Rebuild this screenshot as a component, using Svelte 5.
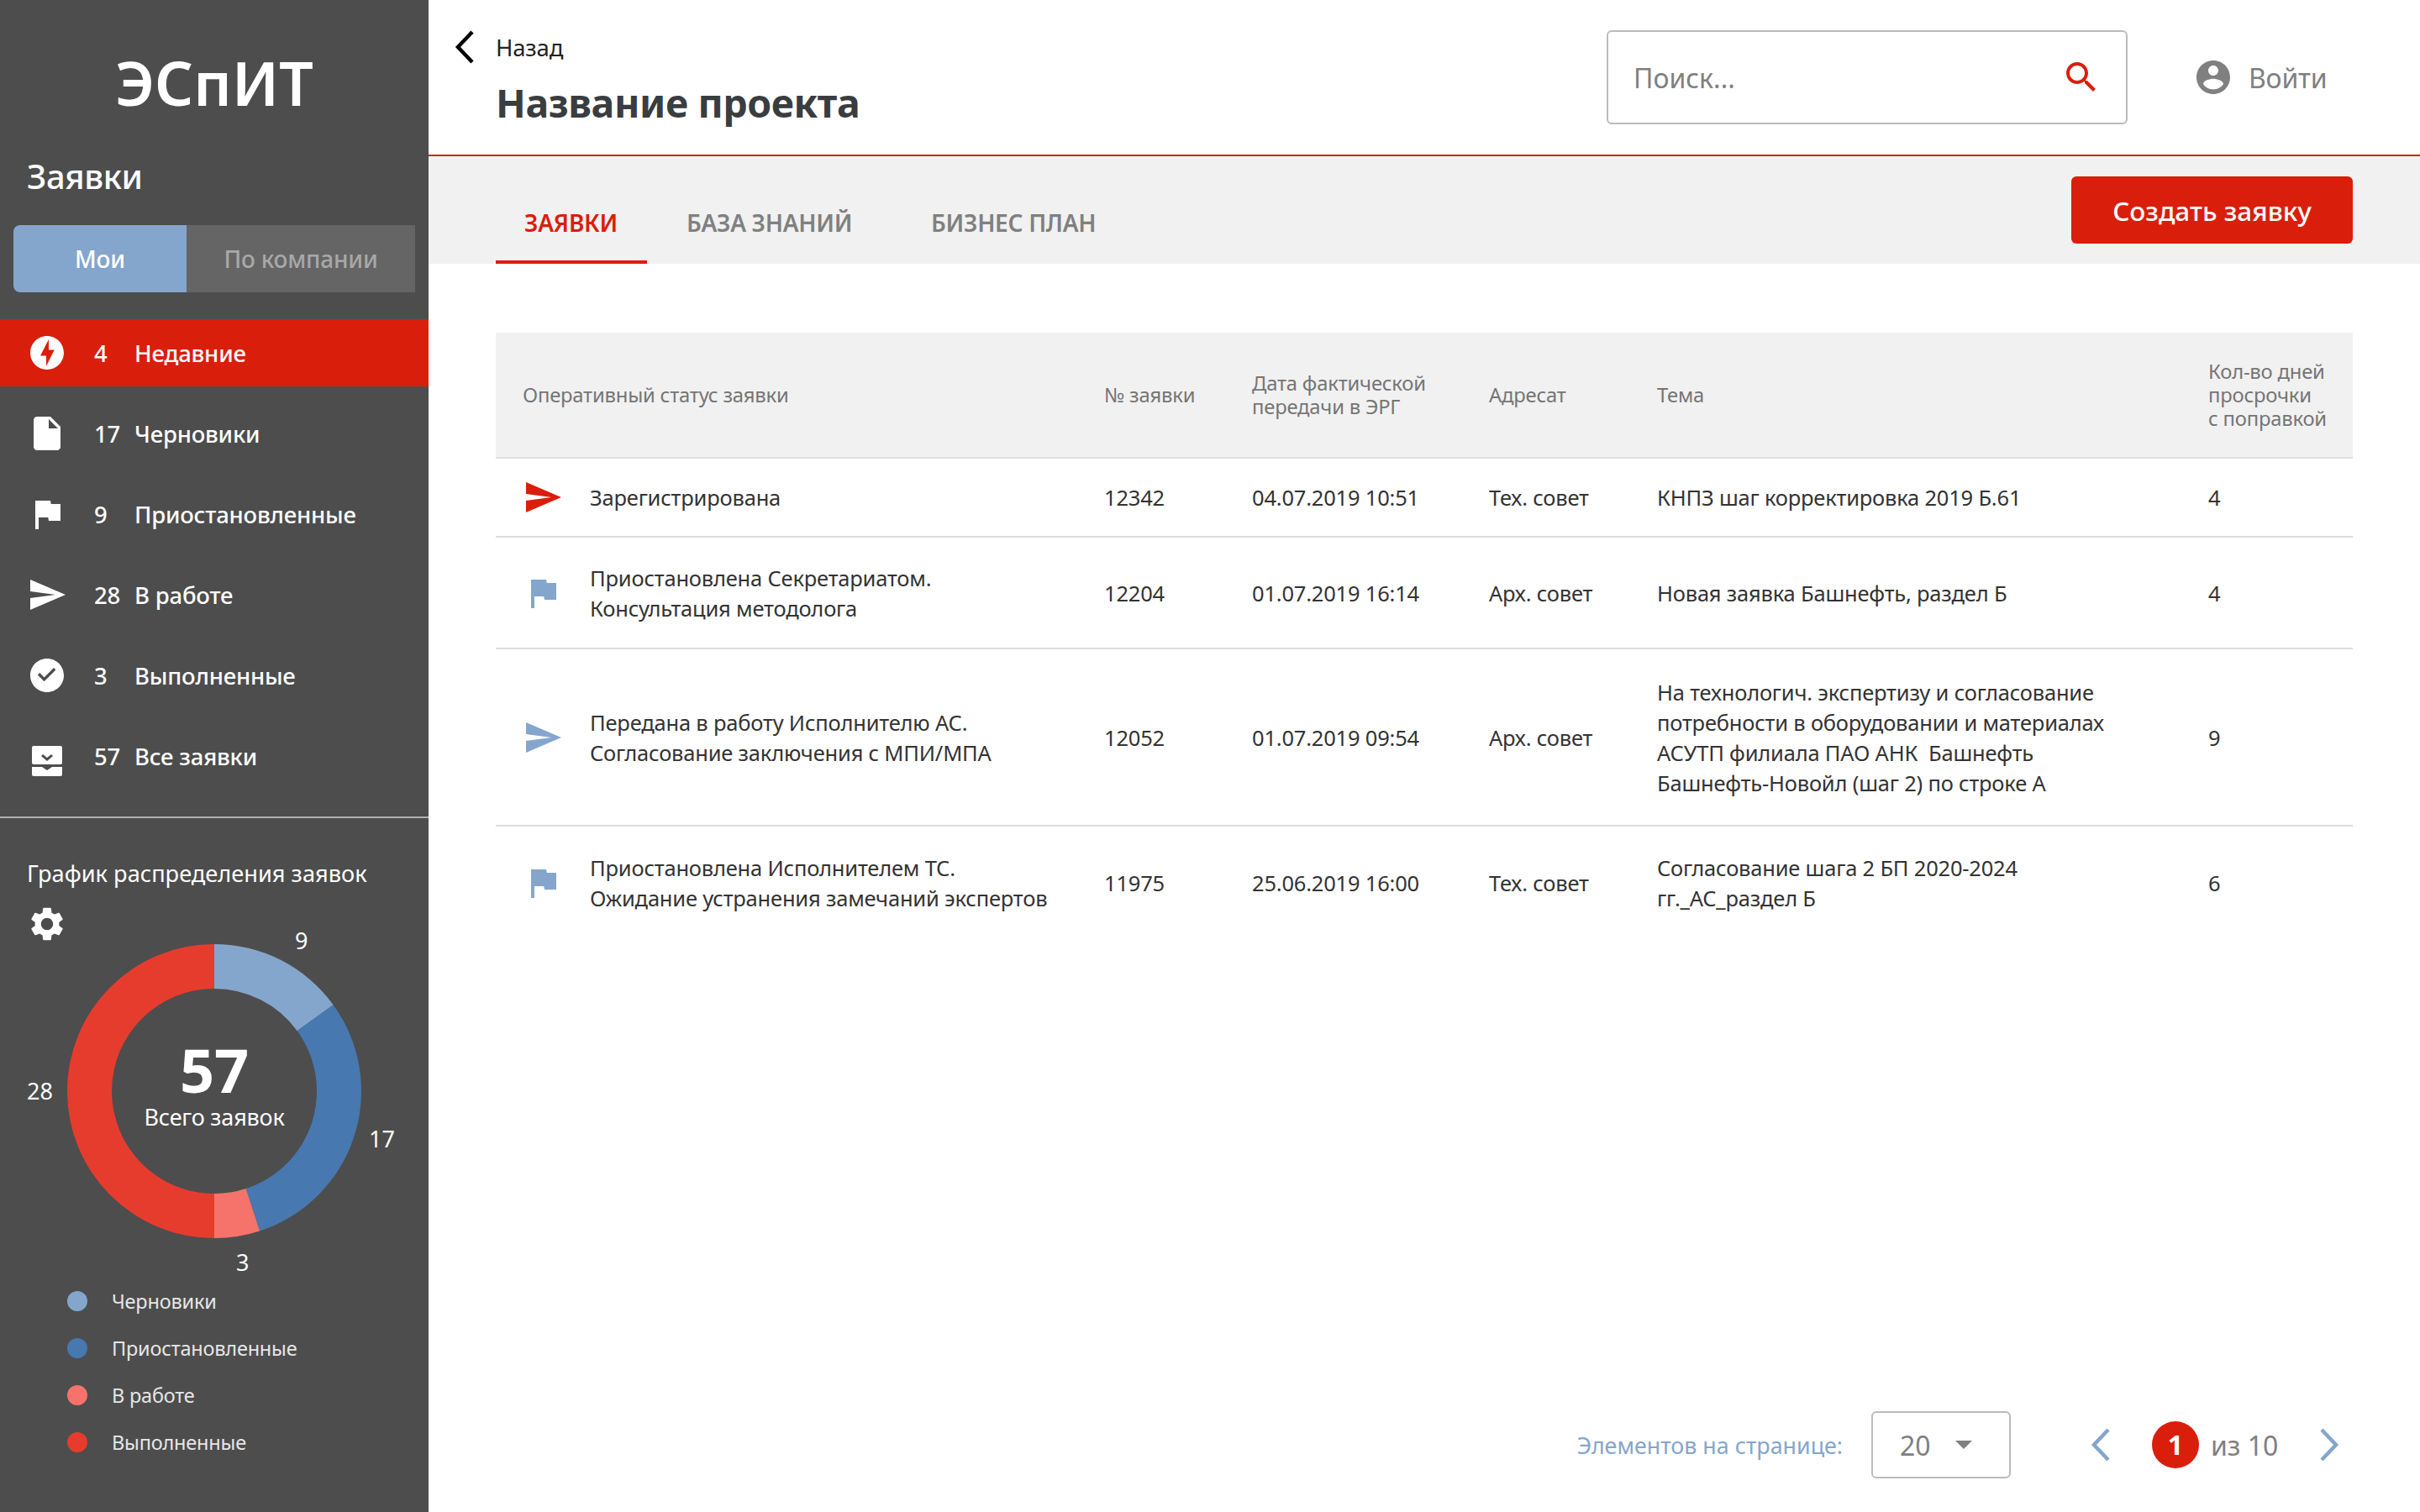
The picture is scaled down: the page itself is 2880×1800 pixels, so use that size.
<script>
	const icons = {
		bolt: 'M12 2.02c-5.51 0-9.98 4.47-9.98 9.98s4.47 9.98 9.98 9.98 9.98-4.47 9.98-9.98S17.51 2.02 12 2.02zM11.48 20v-6.26H8L13 4v6.26h3.35L11.48 20z',
		file: 'M6 2c-1.1 0-1.99.9-1.99 2L4 20c0 1.1.89 2 1.99 2H18c1.1 0 2-.9 2-2V8l-6-6H6zm7 7V3.5L18.5 9H13z',
		flag: 'M14.4 6L14 4H5v17h2v-7h5.6l.4 2h7V6z',
		send: 'M2.01 21L23 12 2.01 3 2 10l15 2-15 2z',
		check: 'M12 2C6.48 2 2 6.48 2 12s4.48 10 10 10 10-4.48 10-10S17.52 2 12 2zm-1.7 13.6l-3.9-3.9 1.2-1.2 2.7 2.7 5.7-5.7 1.2 1.2z',
		inbox: 'M4 6h16a1 1 0 011 1v9a1 1 0 01-1 1H4a1 1 0 01-1-1V7a1 1 0 011-1zm4.5 6L12 15l3.5-3-1-1-2.5 2-2.5-2zM3 18.5h6l3 2 3-2h6V23a1 1 0 01-1 1H4a1 1 0 01-1-1z',
		gear: 'M19.14 12.94c.04-.3.06-.61.06-.94 0-.32-.02-.64-.07-.94l2.03-1.58a.49.49 0 00.12-.61l-1.92-3.32a.488.488 0 00-.59-.22l-2.39.96c-.5-.38-1.03-.7-1.62-.94l-.36-2.54a.484.484 0 00-.48-.41h-3.84c-.24 0-.43.17-.47.41l-.36 2.54c-.59.24-1.13.57-1.62.94l-2.39-.96c-.22-.08-.47 0-.59.22L2.74 8.87c-.12.21-.08.47.12.61l2.03 1.58c-.05.3-.09.63-.09.94s.02.64.07.94l-2.03 1.58a.49.49 0 00-.12.61l1.92 3.32c.12.22.37.29.59.22l2.39-.96c.5.38 1.03.7 1.62.94l.36 2.54c.05.24.24.41.48.41h3.84c.24 0 .44-.17.47-.41l.36-2.54c.59-.24 1.13-.56 1.62-.94l2.39.96c.22.08.47 0 .59-.22l1.92-3.32c.12-.22.07-.47-.12-.61l-2.01-1.58zM12 15.6c-1.98 0-3.6-1.62-3.6-3.6s1.62-3.6 3.6-3.6 3.6 1.62 3.6 3.6-1.62 3.6-3.6 3.6z',
		search: 'M15.5 14h-.79l-.28-.27C15.41 12.59 16 11.11 16 9.5 16 5.91 13.09 3 9.5 3S3 5.91 3 9.5 5.91 16 9.5 16c1.61 0 3.09-.59 4.23-1.57l.27.28v.79l5 4.99L20.49 19l-4.99-5zm-6 0C7.01 14 5 11.99 5 9.5S7.01 5 9.5 5 14 7.01 14 9.5 11.99 14 9.5 14z',
		user: 'M12 2C6.48 2 2 6.48 2 12s4.48 10 10 10 10-4.48 10-10S17.52 2 12 2zm0 3c1.66 0 3 1.34 3 3s-1.34 3-3 3-3-1.34-3-3 1.34-3 3-3zm0 14.2c-2.5 0-4.71-1.28-6-3.22.03-1.99 4-3.08 6-3.08 1.99 0 5.97 1.09 6 3.08-1.29 1.94-3.5 3.22-6 3.22z'
	};

	const menu = [
		{ icon: 'bolt', count: 4, label: 'Недавние', active: true },
		{ icon: 'file', count: 17, label: 'Черновики' },
		{ icon: 'flag', count: 9, label: 'Приостановленные' },
		{ icon: 'send', count: 28, label: 'В работе' },
		{ icon: 'check', count: 3, label: 'Выполненные' },
		{ icon: 'inbox', count: 57, label: 'Все заявки' }
	];

	const legend = [
		{ label: 'Черновики', color: '#85a6cc' },
		{ label: 'Приостановленные', color: '#4778b0' },
		{ label: 'В работе', color: '#f5736a' },
		{ label: 'Выполненные', color: '#e63c2e' }
	];

	// start and end angles read off the chart, clockwise from the top
	const arcs = [
		{ from: 0, to: 54, color: '#85a6cc' },
		{ from: 54, to: 162, color: '#4778b0' },
		{ from: 162, to: 180, color: '#f5736a' },
		{ from: 180, to: 360, color: '#e63c2e' }
	];

	function point(r, deg) {
		const a = (deg * Math.PI) / 180;
		return `${(175 + r * Math.sin(a)).toFixed(2)} ${(175 - r * Math.cos(a)).toFixed(2)}`;
	}

	function arcPath(from, to) {
		const large = to - from > 180 ? 1 : 0;
		const end = to === 360 ? 359.99 : to;
		return `M${point(175, from)}A175 175 0 ${large} 1 ${point(175, end)}L${point(122, end)}A122 122 0 ${large} 0 ${point(122, from)}Z`;
	}

	const rows = [
		{ icon: 'send', color: '#da1e0c', status: ['Зарегистрирована'], num: 12342, date: '04.07.2019 10:51', to: 'Тех. совет', topic: ['КНПЗ шаг корректировка 2019 Б.61'], days: 4 },
		{ icon: 'flag', color: '#85a6cc', status: ['Приостановлена Секретариатом.', 'Консультация методолога'], num: 12204, date: '01.07.2019 16:14', to: 'Арх. совет', topic: ['Новая заявка Башнефть, раздел Б'], days: 4 },
		{ icon: 'send', color: '#85a6cc', status: ['Передана в работу Исполнителю АС.', 'Согласование заключения с МПИ/МПА'], num: 12052, date: '01.07.2019 09:54', to: 'Арх. совет', topic: ['На технологич. экспертизу и согласование', 'потребности в оборудовании и материалах', 'АСУТП филиала ПАО АНК  Башнефть', 'Башнефть-Новойл (шаг 2) по строке А'], days: 9 },
		{ icon: 'flag', color: '#85a6cc', status: ['Приостановлена Исполнителем ТС.', 'Ожидание устранения замечаний экспертов'], num: 11975, date: '25.06.2019 16:00', to: 'Тех. совет', topic: ['Согласование шага 2 БП 2020-2024', 'гг._АС_раздел Б'], days: 6 }
	];
</script>

<div class="page">
	<aside class="sidebar">
		<div class="logo">ЭСпИТ</div>
		<div class="side-title">Заявки</div>
		<div class="toggle">
			<div class="toggle-on">Мои</div>
			<div class="toggle-off">По компании</div>
		</div>
		<nav class="menu">
			{#each menu as item}
				<div class="menu-item" class:active={item.active}>
					<svg class="icon" viewBox="0 0 24 24"><path d={icons[item.icon]} fill="#fff" fill-rule={item.icon === 'inbox' ? 'evenodd' : 'nonzero'} /></svg>
					<span class="count">{item.count}</span>
					<span>{item.label}</span>
				</div>
			{/each}
		</nav>
		<div class="chart-box">
			<div class="chart-title">График распределения заявок</div>
			<svg class="icon gear" viewBox="0 0 24 24"><path d={icons.gear} fill="#fff" /></svg>
			<div class="donut">
				<svg width="350" height="350" viewBox="0 0 350 350">
					{#each arcs as arc}
						<path d={arcPath(arc.from, arc.to)} fill={arc.color} />
					{/each}
				</svg>
				<div class="donut-center">
					<div class="total">57</div>
					<div class="total-label">Всего заявок</div>
				</div>
				<span class="num n9">9</span>
				<span class="num n17">17</span>
				<span class="num n3">3</span>
				<span class="num n28">28</span>
			</div>
			<div class="legend">
				{#each legend as item}
					<div class="legend-row">
						<span class="dot" style="background: {item.color}"></span>
						<span>{item.label}</span>
					</div>
				{/each}
			</div>
		</div>
	</aside>

	<main class="main">
		<header class="top">
			<div class="top-left">
				<div class="back">
					<svg class="chevron" width="26" height="42" viewBox="0 0 26 42"><path d="M22 3L5 21l17 18" fill="none" stroke="#000" stroke-width="4.5" /></svg>
					<span>Назад</span>
				</div>
				<h1>Название проекта</h1>
			</div>
			<div class="search">
				<span>Поиск...</span>
				<svg class="icon" viewBox="0 0 24 24"><path d={icons.search} fill="#da1e0c" /></svg>
			</div>
			<div class="login">
				<svg class="icon" viewBox="0 0 24 24"><path d={icons.user} fill="#808080" /></svg>
				<span>Войти</span>
			</div>
		</header>

		<div class="tabbar">
			<div class="tab tab-active">ЗАЯВКИ</div>
			<div class="tab tab-2">БАЗА ЗНАНИЙ</div>
			<div class="tab tab-3">БИЗНЕС ПЛАН</div>
			<button class="create">Создать заявку</button>
		</div>

		<section class="table">
			<div class="tr thead">
				<div class="first">Оперативный статус заявки</div>
				<div>№ заявки</div>
				<div>Дата фактической<br />передачи в ЭРГ</div>
				<div>Адресат</div>
				<div>Тема</div>
				<div>Кол-во дней<br />просрочки<br />с поправкой</div>
			</div>
			{#each rows as row}
				<div class="tr row">
					<div class="first status">
						<svg class="icon" viewBox="0 0 24 24"><path d={icons[row.icon]} fill={row.color} /></svg>
						<div>
							{#each row.status as line}
								<div>{line}</div>
							{/each}
						</div>
					</div>
					<div>{row.num}</div>
					<div>{row.date}</div>
					<div>{row.to}</div>
					<div>
						{#each row.topic as line}
							<div class="keep">{line}</div>
						{/each}
					</div>
					<div>{row.days}</div>
				</div>
			{/each}
		</section>

		<footer class="pager">
			<span class="per-page">Элементов на странице:</span>
			<div class="select">
				<span>20</span>
				<span class="caret"></span>
			</div>
			<svg class="page-arrow prev" width="26" height="42" viewBox="0 0 26 42"><path d="M22 3L5 21l17 18" fill="none" stroke="#85a6cc" stroke-width="4.5" /></svg>
			<span class="page-no">1</span>
			<span class="page-of">из 10</span>
			<svg class="page-arrow next" width="26" height="42" viewBox="0 0 26 42"><path d="M4 3l17 18L4 39" fill="none" stroke="#85a6cc" stroke-width="4.5" /></svg>
		</footer>
	</main>
</div>

<style>
	:global(body) {
		margin: 0;
		background: #fff;
	}
	.page {
		display: grid;
		grid-template-columns: 510px 1fr;
		width: 2880px;
		height: 1800px;
		overflow: hidden;
		font-family: 'Noto Sans', 'Open Sans', sans-serif;
		font-size: 25.5px;
		letter-spacing: -0.2px;
		color: #333;
	}
	.icon {
		display: block;
		flex: none;
		width: 48px;
		height: 48px;
	}

	.sidebar {
		background: #4d4d4d;
		color: #fff;
	}
	.logo {
		padding-top: 60px;
		font-size: 72px;
		line-height: 76px;
		font-weight: 600;
		letter-spacing: 0;
		text-align: center;
	}
	.side-title {
		padding: 46px 0 0 32px;
		font-size: 40px;
		line-height: 56px;
		font-weight: 500;
		letter-spacing: -0.4px;
	}
	.toggle {
		display: grid;
		grid-template-columns: 206px 272px;
		height: 80px;
		margin: 30px 0 0 16px;
		font-size: 28px;
		font-weight: 500;
		line-height: 80px;
		text-align: center;
		border-radius: 8px;
		overflow: hidden;
	}
	.toggle-on {
		background: #85a6cc;
	}
	.toggle-off {
		background: #656565;
		color: #a8a8a8;
	}
	.menu {
		display: flex;
		flex-direction: column;
		gap: 16px;
		margin-top: 32px;
		padding-bottom: 32px;
		border-bottom: 2px solid #b0b0b0;
	}
	.menu-item {
		display: flex;
		align-items: center;
		height: 80px;
		padding-left: 32px;
		font-size: 27.5px;
		font-weight: 500;
	}
	.active {
		background: #da1e0c;
	}
	.count {
		width: 48px;
		margin-left: 32px;
	}
	.chart-box {
		padding-left: 32px;
	}
	.chart-title {
		padding-top: 48px;
		font-size: 27.2px;
		line-height: 36px;
		letter-spacing: 0;
	}
	.gear {
		margin-top: 18px;
	}
	.donut {
		position: relative;
		width: 350px;
		height: 350px;
		margin: 0 0 0 48px;
	}
	.donut svg {
		display: block;
	}
	.donut-center {
		position: absolute;
		left: 0;
		right: 0;
		top: 110px;
		text-align: center;
	}
	.total {
		font-size: 72px;
		line-height: 78px;
		font-weight: 700;
	}
	.total-label {
		font-size: 27px;
		line-height: 36px;
	}
	.num {
		position: absolute;
		font-size: 27px;
		line-height: 36px;
		letter-spacing: 0;
	}
	.n9 {
		left: 271px;
		top: -22px;
	}
	.n17 {
		left: 359px;
		top: 214px;
	}
	.n3 {
		left: 201px;
		top: 361px;
	}
	.n28 {
		left: -48px;
		top: 157px;
	}
	.legend {
		display: flex;
		flex-direction: column;
		margin: 47px 0 0 48px;
	}
	.legend-row {
		display: flex;
		align-items: center;
		gap: 29px;
		height: 56px;
		font-size: 23.5px;
		color: #e6e6e6;
	}
	.dot {
		width: 24px;
		height: 24px;
		border-radius: 50%;
	}

	.main {
		display: flex;
		flex-direction: column;
		min-width: 0;
	}
	.top {
		display: flex;
		align-items: flex-start;
		height: 184px;
		border-bottom: 2px solid #da1e0c;
		padding-left: 30px;
	}
	.top-left {
		flex: 1;
	}
	.back {
		display: flex;
		align-items: center;
		gap: 24px;
		height: 42px;
		margin-top: 35px;
		font-size: 27.5px;
		color: #222;
	}
	h1 {
		margin: 17px 0 0 50px;
		font-size: 46.5px;
		line-height: 56px;
		font-weight: 700;
		letter-spacing: -0.4px;
		color: #3a3d40;
	}
	.search {
		display: flex;
		align-items: center;
		justify-content: space-between;
		box-sizing: border-box;
		width: 620px;
		height: 112px;
		margin-top: 36px;
		padding: 0 29px 0 30px;
		border: 2px solid #bbb;
		border-radius: 6px;
		font-size: 32px;
		letter-spacing: 0;
		color: #808080;
	}
	.login {
		display: flex;
		align-items: center;
		gap: 18px;
		width: 348px;
		height: 112px;
		margin-top: 36px;
		padding-left: 78px;
		box-sizing: border-box;
		font-size: 32px;
		color: #808080;
	}
	.tabbar {
		display: flex;
		align-items: flex-start;
		height: 128px;
		padding: 0 80px;
		background: #f1f1f1;
	}
	.tab {
		height: 124px;
		line-height: 158px;
		font-size: 28px;
		font-weight: 600;
		letter-spacing: -0.3px;
		color: #808080;
		white-space: nowrap;
	}
	.tab-active {
		box-sizing: content-box;
		width: 112px;
		padding: 0 34px;
		color: #da1e0c;
		border-bottom: 4px solid #da1e0c;
	}
	.tab-2 {
		margin-left: 47px;
		width: 291px;
	}
	.create {
		width: 335px;
		height: 80px;
		margin: 24px 0 0 auto;
		border: 0;
		border-radius: 6px;
		background: #da1e0c;
		color: #fff;
		font: inherit;
		font-size: 31.5px;
		font-weight: 500;
	}

	.table {
		margin: 82px 80px 0;
	}
	.tr {
		display: grid;
		grid-template-columns: 724px 176px 282px 200px 656px 1fr;
		align-items: center;
		box-sizing: border-box;
		border-bottom: 2px solid #ddd;
	}
	.first {
		padding-left: 32px;
	}
	.thead {
		height: 150px;
		background: #f1f1f1;
		font-size: 23.8px;
		line-height: 28px;
		color: #757575;
	}
	.row {
		line-height: 36px;
	}
	.row:nth-child(2) {
		height: 94px;
	}
	.row:nth-child(3) {
		height: 133px;
	}
	.row:nth-child(4) {
		height: 211px;
	}
	.row:nth-child(5) {
		height: 134px;
		border-bottom: 0;
	}
	.status {
		display: flex;
		align-items: center;
		gap: 32px;
	}
	.keep {
		white-space: pre;
	}

	.pager {
		display: flex;
		align-items: center;
		justify-content: flex-end;
		height: 80px;
		margin-top: auto;
		margin-bottom: 40px;
		padding-right: 95px;
		color: #808080;
		font-size: 32px;
		letter-spacing: 0;
	}
	.per-page {
		font-size: 26.8px;
		color: #85a6cc;
	}
	.select {
		display: flex;
		align-items: center;
		justify-content: space-between;
		box-sizing: border-box;
		width: 166px;
		height: 80px;
		margin-left: 34px;
		padding: 0 44px 0 32px;
		border: 2px solid #bbb;
		border-radius: 6px;
	}
	.caret {
		border-left: 10px solid transparent;
		border-right: 10px solid transparent;
		border-top: 10px solid #808080;
	}
	.page-arrow {
		flex: none;
	}
	.prev {
		margin-left: 94px;
	}
	.page-no {
		width: 56px;
		height: 56px;
		margin-left: 48px;
		border-radius: 50%;
		background: #da1e0c;
		color: #fff;
		font-size: 32px;
		font-weight: 700;
		line-height: 56px;
		text-align: center;
	}
	.page-of {
		width: 128px;
		margin-left: 14px;
	}
</style>
